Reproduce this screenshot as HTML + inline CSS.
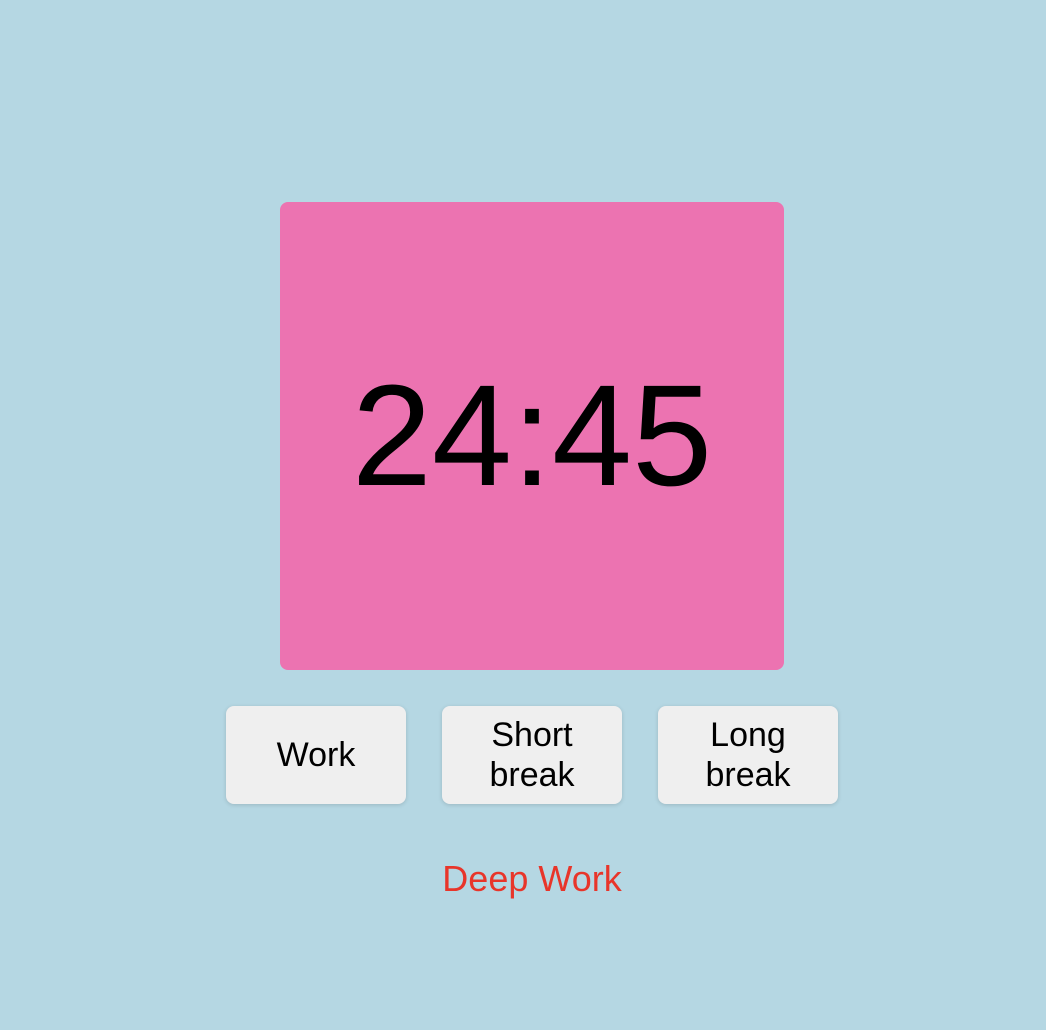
<!DOCTYPE html>
<html><head><meta charset="utf-8"><style>
html,body{margin:0;padding:0;}
body{width:1046px;height:1030px;background:#b5d7e3;font-family:"Liberation Sans",Arial,sans-serif;position:relative;overflow:hidden;}
.box{position:absolute;left:280px;top:202px;width:504px;height:468px;background:#ec73b1;border-radius:8px;display:flex;align-items:center;justify-content:center;}
.time{font-size:144px;color:#000;line-height:1;margin-top:0px;}
.btn{position:absolute;top:706px;width:180px;height:98px;background:#efefef;border-radius:8px;box-shadow:0 1px 4px rgba(0,0,0,0.15);display:flex;align-items:center;justify-content:center;text-align:center;font-size:34px;line-height:40px;color:#000;}
.label{position:absolute;top:858px;left:0;width:1064px;text-align:center;font-size:36px;color:#e8352a;}
</style></head><body>
<div class="box"><div class="time">24:45</div></div>
<div class="btn" style="left:226px">Work</div>
<div class="btn" style="left:442px">Short<br>break</div>
<div class="btn" style="left:658px">Long<br>break</div>
<div class="label">Deep Work</div>
</body></html>
